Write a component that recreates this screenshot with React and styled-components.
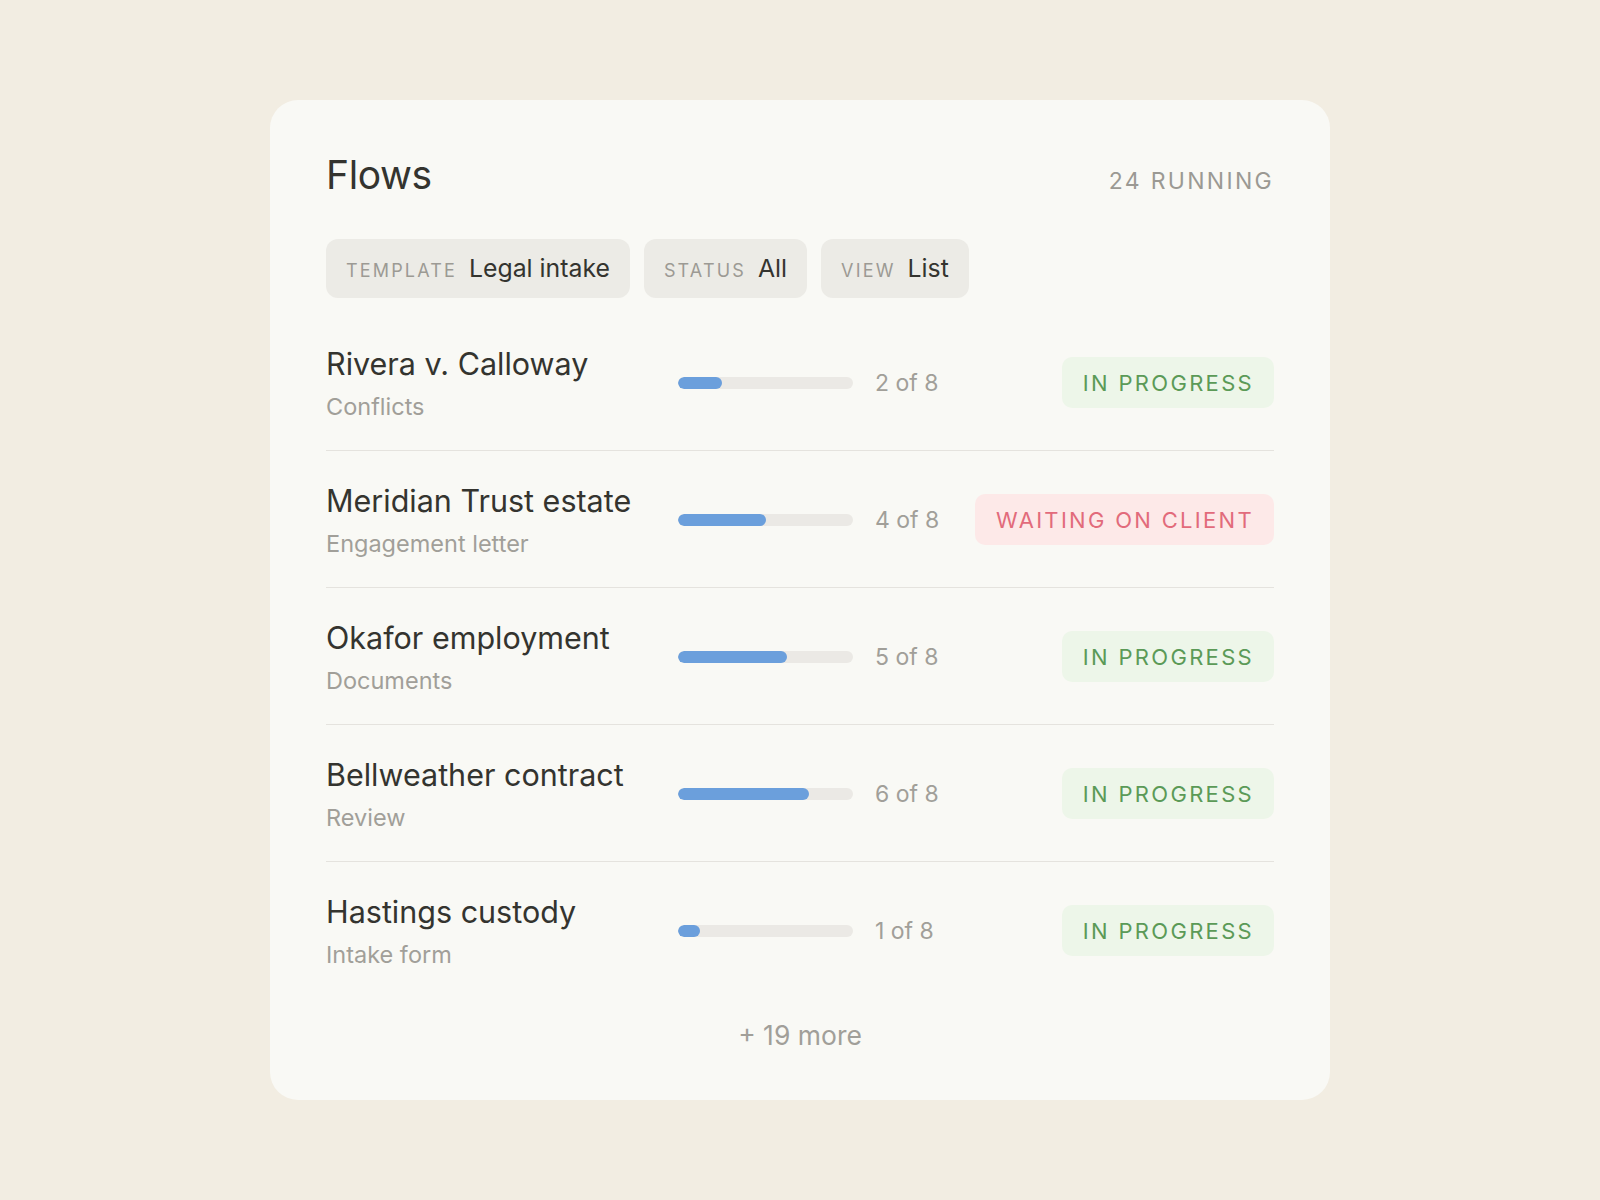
import React from "react";
import styled, { createGlobalStyle } from "styled-components";

const Global = createGlobalStyle`
  html, body { margin: 0; padding: 0; }
  body {
    background: #f2ede2;
    font-family: Inter, "Liberation Sans", Arial, sans-serif;
    -webkit-font-smoothing: antialiased;
  }
`;

const Page = styled.div`
  min-height: 1200px;
  display: flex;
  align-items: center;
  justify-content: center;
`;

const Card = styled.section`
  width: 1060px;
  height: 1000px;
  box-sizing: border-box;
  background: #f9f9f5;
  border-radius: 28px;
  padding: 52px 56px 50px;
  display: flex;
  flex-direction: column;
`;

const Header = styled.header`
  display: flex;
  justify-content: space-between;
  align-items: baseline;
`;

const Title = styled.h1`
  margin: 0;
  font-size: 39px;
  line-height: 46px;
  font-weight: 400;
  letter-spacing: -0.01em;
  color: #34342f;
`;

const Running = styled.span`
  font-size: 23px;
  letter-spacing: 0.1em;
  color: #9b9993;
  text-transform: uppercase;
`;

const Filters = styled.div`
  display: flex;
  gap: 14px;
  margin-top: 41px;
  margin-bottom: 16px;
`;

const Chip = styled.button`
  all: unset;
  display: inline-flex;
  align-items: baseline;
  gap: 12px;
  padding: 15px 20px;
  background: #ecebe6;
  border-radius: 12px;
  font-family: inherit;
  cursor: pointer;
`;

const ChipLabel = styled.span`
  font-size: 18px;
  letter-spacing: 0.12em;
  color: #9c9a94;
  text-transform: uppercase;
`;

const ChipValue = styled.span`
  font-size: 24.8px;
  line-height: 29px;
  color: #34342f;
`;

const List = styled.div`
  display: flex;
  flex-direction: column;
`;

const Row = styled.div`
  display: grid;
  grid-template-columns: 330px 175px 1fr auto;
  column-gap: 22px;
  align-items: center;
  padding: 32px 0 31px;
  border-bottom: ${(p) => (p.$last ? "none" : "1px solid #e5e3de")};
`;

const Info = styled.div`
  display: flex;
  flex-direction: column;
`;

const Name = styled.div`
  font-size: 30.5px;
  line-height: 36px;
  color: #34342f;
  white-space: nowrap;
`;

const Step = styled.div`
  margin-top: 13px;
  font-size: 23.5px;
  line-height: 24px;
  color: #a19f99;
`;

const Track = styled.div`
  height: 12px;
  border-radius: 6px;
  background: #ebe9e5;
  overflow: hidden;
`;

const Fill = styled.div`
  height: 100%;
  border-radius: 6px;
  background: #6b9fdc;
`;

const Count = styled.span`
  font-size: 23px;
  color: #a19f99;
`;

const Badge = styled.span`
  justify-self: end;
  height: 51px;
  display: inline-flex;
  align-items: center;
  padding: 0 20px 0 21px;
  border-radius: 10px;
  font-size: 22px;
  letter-spacing: 0.105em;
  text-transform: uppercase;
  background: ${(p) => (p.$tone === "red" ? "#fde9e8" : "#edf6e9")};
  color: ${(p) => (p.$tone === "red" ? "#e26b7b" : "#5b9a57")};
`;

const More = styled.div`
  margin-top: 22px;
  text-align: center;
  font-size: 26.5px;
  line-height: 30px;
  color: #a19f99;
`;

const flows = [
  { name: "Rivera v. Calloway", step: "Conflicts", done: 2, status: "In progress" },
  { name: "Meridian Trust estate", step: "Engagement letter", done: 4, status: "Waiting on client", tone: "red" },
  { name: "Okafor employment", step: "Documents", done: 5, status: "In progress" },
  { name: "Bellweather contract", step: "Review", done: 6, status: "In progress" },
  { name: "Hastings custody", step: "Intake form", done: 1, status: "In progress" },
];

export default function App() {
  return (
    <>
      <Global />
      <Page>
        <Card>
          <Header>
            <Title>Flows</Title>
            <Running>24 running</Running>
          </Header>
          <Filters>
            <Chip>
              <ChipLabel>Template</ChipLabel>
              <ChipValue>Legal intake</ChipValue>
            </Chip>
            <Chip>
              <ChipLabel>Status</ChipLabel>
              <ChipValue>All</ChipValue>
            </Chip>
            <Chip>
              <ChipLabel>View</ChipLabel>
              <ChipValue>List</ChipValue>
            </Chip>
          </Filters>
          <List>
            {flows.map((f, i) => (
              <Row key={f.name} $last={i === flows.length - 1}>
                <Info>
                  <Name>{f.name}</Name>
                  <Step>{f.step}</Step>
                </Info>
                <Track>
                  <Fill style={{ width: `${(f.done / 8) * 100}%` }} />
                </Track>
                <Count>{f.done} of 8</Count>
                <Badge $tone={f.tone}>{f.status}</Badge>
              </Row>
            ))}
          </List>
          <More>+ 19 more</More>
        </Card>
      </Page>
    </>
  );
}
